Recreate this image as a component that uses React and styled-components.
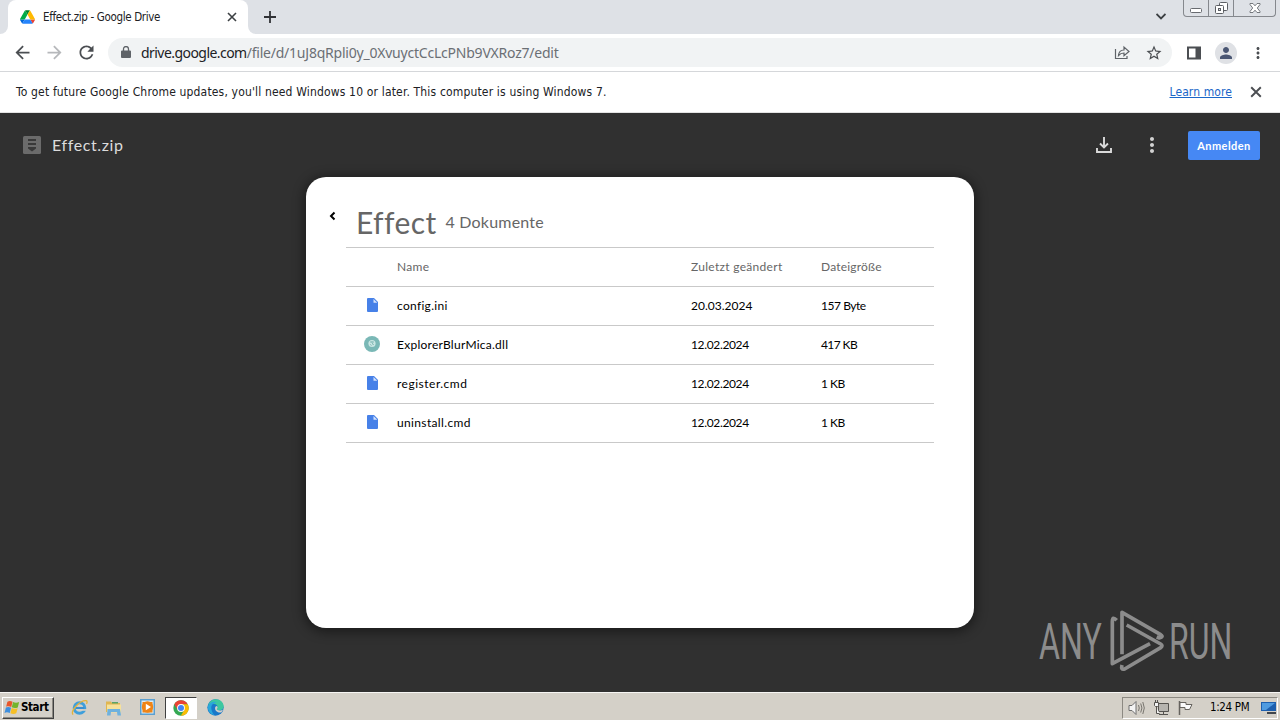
import React from 'react';
import styled, { createGlobalStyle } from 'styled-components';

const GlobalStyle = createGlobalStyle`
  * {
    box-sizing: border-box;
  }

  body {
    margin: 0;
    overflow: hidden;
  }
`;

const uiFont = '"DejaVu Sans Condensed", "DejaVu Sans", "Noto Sans", sans-serif';
const urlFont = '"Noto Sans", "Open Sans", sans-serif';
const docFont = 'Lato, "Open Sans", sans-serif';

const Screen = styled.div`
  width: 1280px;
  height: 720px;
  display: flex;
  flex-direction: column;
  background: #fff;
  font-family: ${uiFont};
`;

const Label = styled.span`
  font-family: ${props => props.$font || uiFont};
  font-size: ${props => props.$size || 12}px;
  font-weight: ${props => props.$weight || 400};
  letter-spacing: ${props => props.$spacing || 0}px;
  color: ${props => props.$color || '#202124'};
  line-height: 1;
  white-space: nowrap;
`;

const Icon = styled.svg`
  display: block;
  flex: none;
  width: ${props => props.$w}px;
  height: ${props => props.$h || props.$w}px;
  fill: ${props => props.$fill || '#4b4e52'};
`;

/* Browser chrome */

const TabStrip = styled.div`
  flex: none;
  height: 34px;
  display: flex;
  background: #dee1e6;
`;

const TabEdge = styled.div`
  width: 8px;
  background: #fff;

  &::before {
    content: '';
    display: block;
    height: 34px;
    background: #dee1e6;
    border-radius: ${props => (props.$right ? '0 0 0 8px' : '0 0 8px 0')};
  }
`;

const Tab = styled.div`
  width: 240px;
  display: flex;
  align-items: center;
  padding: 0 11px 0 12px;
  background: #fff;
  border-radius: 8px 8px 0 0;
`;

const TabTitle = styled(Label)`
  flex: 1;
  margin-left: 8px;
  padding-top: 2px;
`;

const NewTab = styled.div`
  flex: 1;
  padding: 10px 0 0 7px;
`;

const TabSearch = styled.div`
  padding: 13px 17px 0 0;
`;

const WindowControls = styled.div`
  display: flex;
  width: 93px;
  height: 17px;
  margin-right: 4px;
  border: 1px solid #85888d;
  border-top: 0;
  border-radius: 0 0 4px 4px;
`;

const WindowButton = styled.div`
  flex: ${props => props.$grow || '0 0 25px'};
  display: flex;
  align-items: center;
  justify-content: center;
  border-left: ${props => (props.$first ? '0' : '1px solid #85888d')};
`;

const Toolbar = styled.div`
  flex: none;
  height: 38px;
  display: flex;
  align-items: center;
  padding: 0 13px 0 12px;
  border-bottom: 1px solid #d5d7da;
`;

const NavIcons = styled.div`
  display: flex;
  gap: 11px;
  margin-right: 11px;
`;

const Omnibox = styled.div`
  flex: 1;
  height: 29px;
  display: flex;
  align-items: center;
  padding: 0 9px 0 13px;
  border-radius: 15px;
  background: #f1f3f4;
`;

const Url = styled.div`
  flex: 1;
  display: flex;
  margin-left: 10px;
`;

const OmniActions = styled.div`
  display: flex;
  gap: 15px;
`;

const ToolbarActions = styled.div`
  display: flex;
  align-items: center;
  margin-left: 14px;
`;

const Avatar = styled.div`
  width: 22px;
  height: 22px;
  margin: 0 12px 0 13px;
  display: flex;
  align-items: center;
  justify-content: center;
  border-radius: 50%;
  background: #dfe1e5;
`;

const InfoBar = styled.div`
  flex: none;
  height: 41px;
  display: flex;
  align-items: center;
  padding: 0 18px 0 16px;
  border-bottom: 1px solid #e3e3e3;
`;

const InfoText = styled(Label)`
  flex: 1;
`;

const InfoLink = styled(Label)`
  margin-right: 18px;
  text-decoration: underline;
`;

/* Drive viewer */

const Viewer = styled.main`
  flex: 1;
  position: relative;
  background: #303030;
`;

const ViewerBar = styled.header`
  height: 64px;
  display: flex;
  align-items: center;
  padding: 0 20px 0 23px;
`;

const FileTitle = styled(Label)`
  flex: 1;
  margin-left: 11px;
  padding-bottom: 1px;
`;

const ViewerActions = styled.div`
  display: flex;
  align-items: center;
  gap: 28px;
`;

const SignIn = styled.div`
  width: 72px;
  height: 29px;
  margin-left: 24px;
  display: flex;
  align-items: center;
  justify-content: center;
  background: #4688f4;
  border-radius: 2px;
`;

const Card = styled.section`
  width: 668px;
  height: 451px;
  margin: 0 auto;
  display: flex;
  background: #fff;
  border-radius: 20px;
  box-shadow: 0 2px 12px 2px rgba(0, 0, 0, 0.45);
`;

const BackColumn = styled.div`
  width: 40px;
  padding: 34px 0 0 22px;
`;

const Listing = styled.div`
  width: 588px;
`;

const ListingHeader = styled.div`
  height: 70px;
  display: flex;
  align-items: center;
  gap: 9px;
  padding: 19px 0 0 10px;
`;

const Row = styled.div`
  height: 39px;
  display: grid;
  grid-template-columns: 51px 294px 130px 1fr;
  align-items: center;
  border-top: 1px solid #c9c9c9;

  &:last-child {
    height: 40px;
    border-bottom: 1px solid #c9c9c9;
  }
`;

const FileIcon = styled.div`
  width: 16px;
  margin-left: 18px;
  padding-bottom: 2px;
  display: flex;
  justify-content: center;
`;

const Watermark = styled.svg`
  position: absolute;
  right: 46px;
  bottom: 17px;
  width: 198px;
  height: 68px;
  overflow: visible;
  fill: #8c8c8c;
`;

/* Taskbar */

const Taskbar = styled.footer`
  flex: none;
  height: 28px;
  display: flex;
  align-items: center;
  padding: 2px 2px 0 2px;
  background: #d4d0c8;
  border-top: 1px solid #f6f5f3;
`;

const StartButton = styled.div`
  width: 52px;
  height: 22px;
  display: flex;
  align-items: center;
  gap: 1px;
  padding-left: 1px;
  border: 1px solid;
  border-color: #fff #404040 #404040 #fff;
  box-shadow: inset -1px -1px 0 #8c8982;
`;

const QuickLaunch = styled.div`
  flex: 1;
  display: flex;
  align-items: center;
  margin-left: 8px;
`;

const LaunchItem = styled.div`
  width: ${props => (props.$active ? 32 : 34)}px;
  height: 22px;
  margin: ${props => (props.$active ? '0 1px' : '0')};
  display: flex;
  align-items: center;
  justify-content: center;
  background: ${props => (props.$active ? '#fff' : 'transparent')};
  border: ${props => (props.$active ? '1px solid' : '0')};
  border-color: #404040 #fff #fff #404040;
`;

const Tray = styled.div`
  width: 156px;
  height: 22px;
  display: flex;
  align-items: center;
  padding-left: 5px;
  border: 1px solid;
  border-color: #8c8982 #fff #fff #8c8982;
`;

const TrayIcons = styled.div`
  display: flex;
  gap: 8px;
`;

const Clock = styled(Label)`
  flex: 1;
  margin-left: 17px;
`;

const DriveLogo = () =>
  <Icon viewBox="0 0 87.3 78" $w={15} $h={14}>
    <path fill="#0066da" d="m6.6 66.85 3.85 6.65c.8 1.4 1.95 2.5 3.3 3.3l13.75-23.8h-27.5c0 1.55.4 3.1 1.2 4.5z" />
    <path fill="#00ac47" d="m43.65 25-13.75-23.8c-1.35.8-2.5 1.9-3.3 3.3l-25.4 44a9.06 9.06 0 0 0-1.2 4.5h27.5z" />
    <path fill="#ea4335" d="m73.55 76.8c1.35-.8 2.5-1.9 3.3-3.3l1.6-2.75 7.65-13.25c.8-1.4 1.2-2.95 1.2-4.5h-27.5l5.85 11.5z" />
    <path fill="#00832d" d="m43.65 25 13.75-23.8c-1.35-.8-2.9-1.2-4.5-1.2h-18.5c-1.6 0-3.15.45-4.5 1.2z" />
    <path fill="#2684fc" d="m59.8 53h-32.3l-13.75 23.8c1.35.8 2.9 1.2 4.5 1.2h50.8c1.6 0 3.15-.45 4.5-1.2z" />
    <path fill="#ffba00" d="m73.4 26.5-12.7-22c-.8-1.4-1.95-2.5-3.3-3.3l-13.75 23.8 16.15 28h27.45c0-1.55-.4-3.1-1.2-4.5z" />
  </Icon>;

const Cross = ({ size, color }) =>
  <Icon viewBox="0 0 10 10" $w={size}>
    <path d="M1 1l8 8M9 1L1 9" stroke={color} strokeWidth="1.6" />
  </Icon>;

const Dots = ({ color, size }) =>
  <Icon viewBox="0 0 24 24" $w={size} $fill={color}>
    <path d="M12 8c1.1 0 2-.9 2-2s-.9-2-2-2-2 .9-2 2 .9 2 2 2zm0 2c-1.1 0-2 .9-2 2s.9 2 2 2 2-.9 2-2-.9-2-2-2zm0 6c-1.1 0-2 .9-2 2s.9 2 2 2 2-.9 2-2-.9-2-2-2z" />
  </Icon>;

const DocumentIcon = () =>
  <Icon viewBox="0 0 11 14" $w={11} $h={14} $fill="#4781e8">
    <path d="M1 0h6l4 4v9a1 1 0 0 1-1 1H1a1 1 0 0 1-1-1V1a1 1 0 0 1 1-1z" />
    <path fill="#d5e3fc" d="M6.5 1v3.8h3.8z" />
  </Icon>;

const LibraryIcon = () =>
  <Icon viewBox="0 0 16 16" $w={16}>
    <circle cx="8" cy="8" r="8" fill="#7ab8b6" />
    <circle cx="8" cy="7.5" r="3.6" fill="#c9e6e3" />
    <path d="M6.3 6h3.4M8 7.5l1.6 1M6.4 8.6l1 .8" stroke="#6aa9a6" strokeWidth="1" />
  </Icon>;

const ChromeIcon = () =>
  <Icon viewBox="0 0 16 16" $w={16}>
    <circle cx="8" cy="8" r="7.7" fill="#34a853" />
    <path fill="#ea4335" d="M1.3 4.2A7.7 7.7 0 0 1 14.7 4.2H8L4.7 9.9z" />
    <path fill="#fbbc04" d="M14.7 4.2A7.7 7.7 0 0 1 7.8 15.7L11.3 9.9 8 4.2z" />
    <circle cx="8" cy="8" r="3.9" fill="#fff" />
    <circle cx="8" cy="8" r="3" fill="#4285f4" />
  </Icon>;

const ExplorerIcon = () =>
  <Icon viewBox="0 0 18 18" $w={17}>
    <circle cx="9" cy="9.5" r="5.6" fill="none" stroke="#3f9fdb" strokeWidth="3.2" />
    <path d="M5 9.5h9" stroke="#3a8fd0" strokeWidth="2.2" />
    <path fill="#d4d0c8" d="M11 10.7h7v1.8h-7z" />
    <path d="M2.2 16.5C-1 13 9 1.5 16 1.8c1.4.3 1.2 2 .4 3.3" fill="none" stroke="#e3b23a" strokeWidth="1.4" />
  </Icon>;

const FolderIcon = () =>
  <Icon viewBox="0 0 17 16" $w={17} $h={16}>
    <path fill="#e0b652" d="M1 1.500h5l1 1.500h8V12H1z" />
    <path fill="#5aa469" d="M7 2h6v1.500H7z" />
    <path fill="#f7e19a" d="M2 4.500h14v8H2z" />
    <path fill="#6fb1de" d="M2.500 9h12.500l1 6.500h-3.500l-.5-3.500H6l-.5 3.500H2z" />
  </Icon>;

const MediaIcon = () =>
  <Icon viewBox="0 0 17 17" $w={17}>
    <path fill="#5b9fd0" d="M1 0h15v16H1z" />
    <path fill="#dcecf6" d="M2.5 1.5h12v13h-12z" />
    <path fill="#ee8417" d="M3.500 3h10v10.500h-10z" />
    <circle cx="8.500" cy="8" r="5.700" fill="#ee8417" />
    <path fill="#fff" d="M6.800 4.800v6.400L12 8z" />
  </Icon>;

const EdgeIcon = () =>
  <Icon viewBox="0 0 16 16" $w={17}>
    <circle cx="8" cy="8" r="7.7" fill="#1a78c9" />
    <path fill="#3dc8a0" d="M1 6.5C2.2 2.400 5 .3 8.200.3c4.500 0 7.500 3.300 7.500 6.600 0 2.400-1.800 3.800-4 3.800-1.700 0-2.500-.6-2.500-1.200 0-.5.800-.8.800-2C10 5.700 8.200 4.500 6 4.500 4 4.500 2 5.300 1 6.500z" />
    <path fill="#2aa7dc" d="M1 6.500C2.500 3.200 6 1.800 9 3c-1 .2-3 .8-4.300 2.600C3.200 7.800 4.200 12 7 15.500A7.700 7.700 0 0 1 1 6.500z" />
    <path fill="#d4d0c8" d="M9.200 9.500c0 .8 1 1.400 2.800 1.400 1.300 0 2.400-.4 3.100-1.100-.3 1-.8 1.900-1.500 2.700-2.900.8-6-.9-6-3.800 0-.9.500-1.600 1.100-2 1 .1 1.300.8 1.300 1.300 0 .7-.8 1-.8 1.500z" />
  </Icon>;

const WindowsFlag = () =>
  <Icon viewBox="0 0 15 14" $w={16} $h={15}>
    <path fill="#e8562a" d="M3.200 1.500C5 .6 6.500.8 8 1.700L6.800 6.600C5.200 5.800 3.600 5.700 2 6.400z" />
    <path fill="#74b42c" d="M8.500 1.900c1.700.9 3.600 1 5.700 0l-1.300 5c-1.900.9-3.800.8-5.600-.1z" />
    <path fill="#3d8ede" d="M1.800 7.100c1.700-.8 3.200-.6 4.800.2l-1.200 4.900c-1.700-.8-3.200-.9-4.900-.1z" />
    <path fill="#f6bf26" d="M7.200 7.500c1.800.9 3.600 1 5.600.1l-1.300 4.900c-1.900.9-3.700.8-5.500-.1z" />
  </Icon>;

const files = [
  { name: 'config.ini', date: '20.03.2024', size: '157 Byte', icon: DocumentIcon, gaps: [0.3, 0, -0.45] },
  { name: 'ExplorerBlurMica.dll', date: '12.02.2024', size: '417 KB', icon: LibraryIcon, gaps: [0.25, -0.35, -0.6] },
  { name: 'register.cmd', date: '12.02.2024', size: '1 KB', icon: DocumentIcon, gaps: [0.5, -0.35, -0.5] },
  { name: 'uninstall.cmd', date: '12.02.2024', size: '1 KB', icon: DocumentIcon, gaps: [0.35, -0.35, -0.5] }
];

const HeadCell = ({ children, spacing }) =>
  <Label $font={docFont} $size={12} $spacing={spacing} $color="#666">{children}</Label>;

const Cell = ({ children, spacing }) =>
  <Label $font={docFont} $size={12} $spacing={spacing} $color="#000">{children}</Label>;

const BrowserTabs = () =>
  <TabStrip>
    <TabEdge />
    <Tab>
      <DriveLogo />
      <TabTitle $size={11.5} $spacing={-0.35}>Effect.zip - Google Drive</TabTitle>
      <Cross size={10} color="#3c4043" />
    </Tab>
    <TabEdge $right />
    <NewTab>
      <Icon viewBox="0 0 14 14" $w={14}>
        <path d="M7 1v12M1 7h12" stroke="#303236" strokeWidth="1.8" />
      </Icon>
    </NewTab>
    <TabSearch>
      <Icon viewBox="0 0 10 7" $w={10} $h={7}>
        <path d="M.5 1L5 5.500 9.500 1" fill="none" stroke="#3c4043" strokeWidth="1.8" />
      </Icon>
    </TabSearch>
    <WindowControls>
      <WindowButton $first $grow="0 0 24px">
        <Icon viewBox="0 0 12 16" $w={12} $h={16}>
          <rect x=".5" y="8.500" width="11" height="4" rx="1" fill="#fff" stroke="#686b70" />
        </Icon>
      </WindowButton>
      <WindowButton>
        <Icon viewBox="0 0 13 16" $w={13} $h={16}>
          <rect x="4.500" y="2.500" width="8" height="8" rx="1" fill="#fff" stroke="#5c5f64" />
          <rect x=".5" y="5.500" width="8" height="8" rx="1" fill="#fff" stroke="#5c5f64" />
          <rect x="3.500" y="8.500" width="2" height="2" fill="#dee1e6" stroke="#5c5f64" />
        </Icon>
      </WindowButton>
      <WindowButton $grow="1">
        <Icon viewBox="0 0 12 16" $w={12} $h={16}>
          <path d="M1 3.500h3l2 2.300 2-2.300h3v1L8.300 8l2.700 3.500v1H8L6 10.200 4 12.500H1v-1L3.700 8 1 4.500z" fill="#fff" stroke="#686b70" strokeWidth=".9" />
        </Icon>
      </WindowButton>
    </WindowControls>
  </TabStrip>;

const AddressBar = () =>
  <Toolbar>
    <NavIcons>
      <Icon viewBox="0 0 24 24" $w={21}>
        <path d="M20 11H7.830l5.590-5.590L12 4l-8 8 8 8 1.410-1.410L7.830 13H20v-2z" />
      </Icon>
      <Icon viewBox="0 0 24 24" $w={21} $fill="#b6b8bb">
        <path d="M4 11h12.170l-5.590-5.590L12 4l8 8-8 8-1.410-1.410L16.170 13H4v-2z" />
      </Icon>
      <Icon viewBox="0 0 24 24" $w={21}>
        <path d="M17.650 6.350C16.200 4.900 14.210 4 12 4c-4.420 0-7.990 3.580-7.990 8s3.570 8 7.990 8c3.730 0 6.840-2.550 7.730-6h-2.080c-.82 2.330-3.040 4-5.650 4-3.310 0-6-2.690-6-6s2.690-6 6-6c1.660 0 3.140.69 4.220 1.780L13 11h7V4l-2.350 2.350z" />
      </Icon>
    </NavIcons>
    <Omnibox>
      <Icon viewBox="0 0 10 13" $w={10} $h={13} $fill="#5f6368">
        <path d="M1 4.500h8a1 1 0 0 1 1 1V11a1 1 0 0 1-1 1H1a1 1 0 0 1-1-1V5.500a1 1 0 0 1 1-1z" />
        <path d="M2.500 5V3a2.500 2.500 0 0 1 5 0v2" fill="none" stroke="#5f6368" strokeWidth="1.300" />
      </Icon>
      <Url>
        <Label $font={urlFont} $size={14} $spacing={-0.55}>drive.google.com</Label>
        <Label $font={urlFont} $size={14} $spacing={-0.22} $color="#6b6f74">/file/d/1uJ8qRpli0y_0XvuyctCcLcPNb9VXRoz7/edit</Label>
      </Url>
      <OmniActions>
        <Icon viewBox="0 0 16 16" $w={16}>
          <path d="M1.500 5v9.500H13V12M4.500 11.500C4.800 7.500 7 6 10 6V3l5 4.500-5 4.300V9C7.500 9 6 9.700 4.500 11.500z" fill="none" stroke="#5f6368" strokeWidth="1.200" />
        </Icon>
        <Icon viewBox="0 0 24 24" $w={18}>
          <path d="M22 9.240l-7.190-.62L12 2 9.190 8.630 2 9.240l5.460 4.730L5.820 21 12 17.270 18.180 21l-1.630-7.030L22 9.240zM12 15.400l-3.760 2.270 1-4.280-3.320-2.880 4.380-.38L12 6.100l1.710 4.040 4.380.38-3.320 2.880 1 4.280L12 15.400z" />
        </Icon>
      </OmniActions>
    </Omnibox>
    <ToolbarActions>
      <Icon viewBox="0 0 16 16" $w={16}>
        <path d="M1 1.500h14v13H1zM3 3.500v9h6.500v-9z" fillRule="evenodd" />
      </Icon>
      <Avatar>
        <Icon viewBox="0 0 24 24" $w={18} $fill="#4a5673">
          <path d="M12 12c2.210 0 4-1.790 4-4s-1.790-4-4-4-4 1.790-4 4 1.790 4 4 4zm0 2c-2.670 0-8 1.340-8 4v2h16v-2c0-2.660-5.330-4-8-4z" />
        </Icon>
      </Avatar>
      <Dots size={18} color="#4b4e52" />
    </ToolbarActions>
  </Toolbar>;

const FileCard = () =>
  <Card>
    <BackColumn>
      <Icon viewBox="0 0 8 10" $w={8} $h={10}>
        <path d="M6.500 1.500L3 5l3.500 3.500" fill="none" stroke="#000" strokeWidth="2" />
      </Icon>
    </BackColumn>
    <Listing>
      <ListingHeader>
        <Label $font={docFont} $size={30} $spacing={0.4} $color="#666">Effect</Label>
        <Label $font={docFont} $size={16} $spacing={0.2} $color="#666">4 Dokumente</Label>
      </ListingHeader>
      <Row>
        <span />
        <HeadCell spacing={0.3}>Name</HeadCell>
        <HeadCell spacing={0.3}>Zuletzt geändert</HeadCell>
        <HeadCell spacing={0.2}>Dateigröße</HeadCell>
      </Row>
      {files.map(file =>
        <Row key={file.name}>
          <FileIcon>
            <file.icon />
          </FileIcon>
          <Cell spacing={file.gaps[0]}>{file.name}</Cell>
          <Cell spacing={file.gaps[1]}>{file.date}</Cell>
          <Cell spacing={file.gaps[2]}>{file.size}</Cell>
        </Row>
      )}
    </Listing>
  </Card>;

const AnyRunMark = () =>
  <Watermark viewBox="48 36 594 204">
    <text x="57" y="192" fontFamily="Roboto, sans-serif" fontSize="152" fontWeight="400" textLength="188" lengthAdjust="spacingAndGlyphs">ANY</text>
    <text x="447" y="192" fontFamily="Roboto, sans-serif" fontSize="152" fontWeight="400" textLength="190" lengthAdjust="spacingAndGlyphs">RUN</text>
    <g fill="none" stroke="#8c8c8c" strokeWidth="11" strokeLinejoin="round">
      <path d="M306 178V52L422 119Q432 126 418 129L410 126" />
      <path d="M320 90L422 147Q430 152 422 158L314 222Q302 226 306 210" />
      <path d="M290 76Q277 62 277 80V206L390 146" />
    </g>
  </Watermark>;

const SystemTray = () =>
  <Tray>
    <TrayIcons>
      <Icon viewBox="0 0 17 16" $w={17} $h={16}>
        <path d="M1 5.500h3l4-4v13l-4-4H1z" fill="#f4f4f4" stroke="#6e6e6e" />
        <path d="M10.500 5q1.500 3 0 6M12.700 3.500q2.500 4.500 0 9M14.800 2q3 6 0 12" fill="none" stroke="#77746e" />
      </Icon>
      <Icon viewBox="0 0 16 16" $w={16}>
        <path d="M5.500 3.500h10v8h-10zM6 14.500h9M10.500 12v2" fill="#b6b4af" stroke="#55534f" />
        <path d="M1.500 2.500h4v3l-1 1h-2l-1-1zM2.500 0v2M4.500 0v2M3.500 7v6.500h3" fill="#f4f4f4" stroke="#55534f" />
      </Icon>
      <Icon viewBox="0 0 16 16" $w={16}>
        <path d="M2.500 1v14" stroke="#66635e" strokeWidth="1.500" />
        <path d="M3 2.500h6v2h6l-2.500 5H8v-2H3z" fill="#fafafa" stroke="#66635e" />
      </Icon>
    </TrayIcons>
    <Clock $size={11.5} $spacing={-0.35} $color="#000">1:24 PM</Clock>
    <Icon viewBox="0 0 16 14" $w={16} $h={14}>
      <path fill="#1d5fae" d="M0 1h15v9H0z" />
      <path fill="#4f9be0" d="M1 2h13l-9 7H1z" />
      <path fill="#41464d" d="M6 11h9v2H6z" />
    </Icon>
  </Tray>;

const App = () =>
  <Screen>
    <GlobalStyle />
    <BrowserTabs />
    <AddressBar />
    <InfoBar>
      <InfoText $size={12} $spacing={0.165}>
        To get future Google Chrome updates, you'll need Windows 10 or later. This computer is using Windows 7.
      </InfoText>
      <InfoLink $size={12} $spacing={0.1} $color="#1a66c8">Learn more</InfoLink>
      <Cross size={12} color="#4b4e52" />
    </InfoBar>
    <Viewer>
      <ViewerBar>
        <Icon viewBox="0 0 18 18" $w={18} $fill="#6b6b6b">
          <rect width="18" height="18" rx="1.500" />
          <path fill="#393939" d="M5 3h8v2H5zM5 7h8v2H5zM5 11h8v1.500l-4 3-4-3z" />
        </Icon>
        <FileTitle $font={docFont} $size={16} $spacing={0.6} $color="#dcdcdc">Effect.zip</FileTitle>
        <ViewerActions>
          <Icon viewBox="0 0 16 16" $w={16}>
            <path d="M8 0v10M4 6.500l4 4 4-4M1 11v4h14v-4" fill="none" stroke="#dadada" strokeWidth="1.900" />
          </Icon>
          <Dots size={24} color="#d2d2d2" />
        </ViewerActions>
        <SignIn>
          <Label $font={docFont} $size={11} $weight={700} $spacing={0.45} $color="#fff">Anmelden</Label>
        </SignIn>
      </ViewerBar>
      <FileCard />
      <AnyRunMark />
    </Viewer>
    <Taskbar>
      <StartButton>
        <WindowsFlag />
        <Label $size={11.5} $weight={700} $spacing={-0.4} $color="#000">Start</Label>
      </StartButton>
      <QuickLaunch>
        <LaunchItem><ExplorerIcon /></LaunchItem>
        <LaunchItem><FolderIcon /></LaunchItem>
        <LaunchItem><MediaIcon /></LaunchItem>
        <LaunchItem $active><ChromeIcon /></LaunchItem>
        <LaunchItem><EdgeIcon /></LaunchItem>
      </QuickLaunch>
      <SystemTray />
    </Taskbar>
  </Screen>;

export default App;
